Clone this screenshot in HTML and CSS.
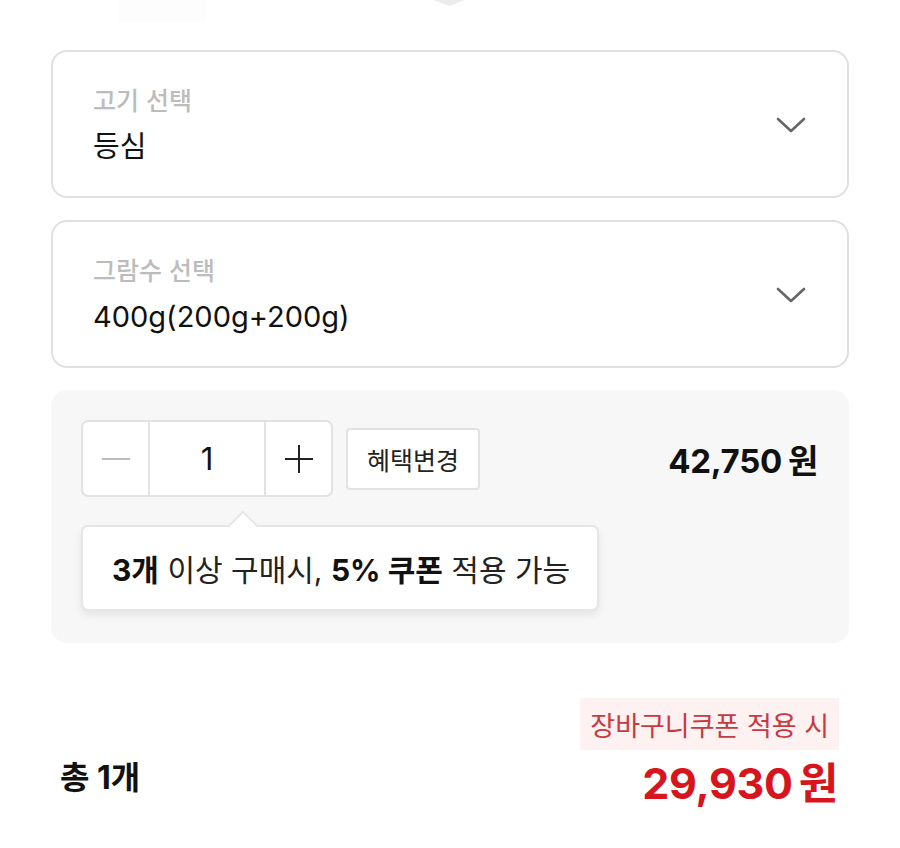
FILE: index.html
```html
<!DOCTYPE html>
<html lang="ko">
<head>
<meta charset="utf-8">
<link rel="stylesheet" href="styles.css">
</head>
<body>
<div class="ghost-top"><span class="ghost-box"></span><span class="ghost-tri"></span></div>
<main class="page">
  <div class="select">
    <div class="select-text">
      <div class="select-label">고기 선택</div>
      <div class="select-value">등심</div>
    </div>
    <svg class="chev" width="30" height="16" viewBox="0 0 30 16"><path d="M2 2 L15 14 L28 2" fill="none" stroke="#666" stroke-width="2.6" stroke-linecap="round" stroke-linejoin="round"/></svg>
  </div>
  <div class="select">
    <div class="select-text">
      <div class="select-label">그람수 선택</div>
      <div class="select-value">400g(200g+200g)</div>
    </div>
    <svg class="chev" width="30" height="16" viewBox="0 0 30 16"><path d="M2 2 L15 14 L28 2" fill="none" stroke="#666" stroke-width="2.6" stroke-linecap="round" stroke-linejoin="round"/></svg>
  </div>

  <section class="panel">
    <div class="panel-row">
      <div class="stepper">
        <div class="step-btn">
          <svg width="30" height="30" viewBox="0 0 30 30"><path d="M1 15 H29" stroke="#bbb" stroke-width="2"/></svg>
        </div>
        <div class="step-qty">1</div>
        <div class="step-btn">
          <svg width="30" height="30" viewBox="0 0 30 30"><path d="M1 15 H29 M15 1 V29" stroke="#222" stroke-width="2"/></svg>
        </div>
      </div>
      <button class="benefit">혜택변경</button>
      <div class="item-price">42,750<span class="won">원</span></div>
    </div>
    <div class="tooltip">
      <span class="caret"></span>
      <span class="tip-text"><b>3개</b> 이상 구매시, <b>5% 쿠폰</b> 적용 가능</span>
    </div>
  </section>

  <section class="total">
    <div class="total-count">총 1개</div>
    <div class="total-right">
      <div class="coupon-badge">장바구니쿠폰 적용 시</div>
      <div class="total-price">29,930<span class="won">원</span></div>
    </div>
  </section>
</main>
</body>
</html>
```

FILE: styles.css
```css
* { box-sizing: border-box; }
html, body {
  margin: 0;
  padding: 0;
  background: #fff;
}
body {
  font-family: "Inter", "Noto Sans CJK KR", sans-serif;
  color: #111;
  width: 900px;
  height: 848px;
  overflow: hidden;
  position: relative;
}
.ghost-top {
  position: absolute;
  top: 0;
  left: 0;
  width: 900px;
  height: 30px;
}
.ghost-box {
  position: absolute;
  left: 118px;
  top: 0;
  width: 88px;
  height: 22px;
  background: #fdfdfd;
}
.ghost-tri {
  position: absolute;
  left: 433px;
  top: 0;
  width: 0;
  height: 0;
  border-left: 16px solid transparent;
  border-right: 16px solid transparent;
  border-top: 6px solid #ececec;
}
.page {
  padding: 50px 51px 0;
  display: flex;
  flex-direction: column;
  gap: 22px;
}
.select {
  height: 148px;
  border: 2px solid #e0e0e0;
  border-radius: 16px;
  padding: 0 41px 0 40px;
  display: flex;
  align-items: center;
  justify-content: space-between;
}
.select-text {
  display: flex;
  flex-direction: column;
  gap: 13px;
}
.select-label {
  font-family: "Noto Sans CJK KR", sans-serif;
  font-size: 25px;
  line-height: 32px;
  color: #bcbcbc;
  font-weight: 500;
}
.select-value {
  font-size: 29px;
  line-height: 38px;
  color: #111;
}
.chev { display: block; margin-top: 2px; }

.panel {
  background: #f7f7f7;
  border-radius: 16px;
  padding: 30px 31px 32px 30px;
  display: flex;
  flex-direction: column;
  gap: 28px;
}
.panel-row {
  display: flex;
  align-items: center;
}
.stepper {
  display: flex;
  height: 77px;
  border: 2px solid #e2e2e2;
  border-radius: 7px;
  background: #fff;
  overflow: hidden;
}
.step-btn {
  width: 65px;
  display: flex;
  align-items: center;
  justify-content: center;
}
.step-qty {
  width: 118px;
  border-left: 2px solid #e2e2e2;
  border-right: 2px solid #e2e2e2;
  display: flex;
  align-items: center;
  justify-content: center;
  font-size: 31px;
  color: #111;
}
.benefit {
  margin-left: 13px;
  height: 62px;
  width: 134px;
  padding: 0;
  border: 2px solid #e2e2e2;
  border-radius: 4px;
  background: #fff;
  font-family: "Noto Sans CJK KR", sans-serif;
  font-size: 25px;
  color: #222;
}
.item-price {
  margin-left: auto;
  font-size: 33px;
  font-weight: 700;
  color: #111;
  letter-spacing: -0.3px;
}
.won { margin-left: 6px; font-family: "Noto Sans CJK KR", sans-serif; }

.tooltip {
  position: relative;
  width: 518px;
  height: 86px;
  background: #fff;
  border: 2px solid #e6e6e6;
  border-radius: 7px;
  box-shadow: 0 4px 8px rgba(0,0,0,0.08);
  padding: 0 0 0 29px;
  display: flex;
  align-items: center;
}
.tip-text {
  font-size: 30px;
  color: #222;
  white-space: nowrap;
}
.tip-text b { font-weight: 700; color: #111; }
.caret {
  position: absolute;
  left: 149px;
  top: -12px;
  width: 22px;
  height: 22px;
  background: #fff;
  border-left: 2px solid #e6e6e6;
  border-top: 2px solid #e6e6e6;
  transform: rotate(45deg);
}

.total {
  margin-top: 33px;
  display: flex;
  justify-content: space-between;
  align-items: flex-end;
  padding: 0 10px 0 9px;
}
.total-count {
  font-size: 32px;
  font-weight: 700;
  line-height: 44px;
  margin-bottom: 9px;
}
.total-right {
  display: flex;
  flex-direction: column;
  align-items: flex-end;
}
.coupon-badge {
  height: 52px;
  padding: 0 10px;
  background: #fdf1f1;
  color: #c73a40;
  font-family: "Noto Sans CJK KR", sans-serif;
  font-size: 27px;
  display: flex;
  align-items: center;
}
.total-price {
  margin-top: 4px;
  margin-right: 1px;
  font-size: 43px;
  line-height: 52px;
  font-weight: 700;
  color: #d8141c;
  letter-spacing: -0.3px;
}
```
